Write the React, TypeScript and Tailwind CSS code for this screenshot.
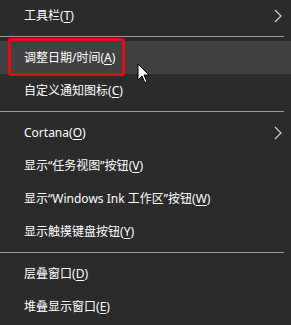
import React from "react";

const font = { fontFamily: '"Noto Sans", "Noto Sans CJK SC", sans-serif' };

function Chevron() {
  return (
    <svg width="8" height="14" viewBox="0 0 8 14" className="absolute right-[9px] top-1/2 -translate-y-1/2">
      <path d="M1 1 L7 7 L1 13" fill="none" stroke="#d8d8d8" strokeWidth="1.1" />
    </svg>
  );
}

function Item({ label, key2, sub, highlight }: { label: string; key2: string; sub?: boolean; highlight?: boolean }) {
  return (
    <div className={`relative flex h-[33px] items-center pl-[24px] text-[12px] text-white ${highlight ? "bg-[#414141]" : ""}`}>
      <span className="leading-none">
        {label}(<span className="underline underline-offset-2">{key2}</span>)
      </span>
      {sub && <Chevron />}
    </div>
  );
}

function Sep() {
  return (
    <div className="flex h-[9px] items-center pr-[7px]">
      <div className="h-px w-full bg-[#9a9a9a]" />
    </div>
  );
}

export default function App() {
  return (
    <div className="relative h-[325px] w-[291px] overflow-hidden bg-[#2b2b2b]" style={font}>
      <div className="-mt-[1px]">
        <Item label="工具栏" key2="T" sub />
        <Sep />
        <Item label="调整日期/时间" key2="A" highlight />
        <Item label="自定义通知图标" key2="C" />
        <Sep />
        <Item label="Cortana" key2="O" sub />
        <Item label="显示“任务视图”按钮" key2="V" />
        <Item label="显示“Windows Ink 工作区”按钮" key2="W" />
        <Item label="显示触摸键盘按钮" key2="Y" />
        <Sep />
        <Item label="层叠窗口" key2="D" />
        <Item label="堆叠显示窗口" key2="E" />
      </div>
      <div className="absolute left-[8px] top-[38px] h-[38px] w-[117px] rounded-[3px] border-[3px] border-[#dc0f18]" />
      <svg className="absolute left-[137px] top-[63px]" width="14" height="22" viewBox="0 0 14 22">
        <path d="M1 1 L1 17 L5 13 L8 20 L10 19 L7 12 L12 12 Z" fill="#ffffff" stroke="#000000" strokeWidth="1" strokeLinejoin="miter" />
      </svg>
    </div>
  );
}
